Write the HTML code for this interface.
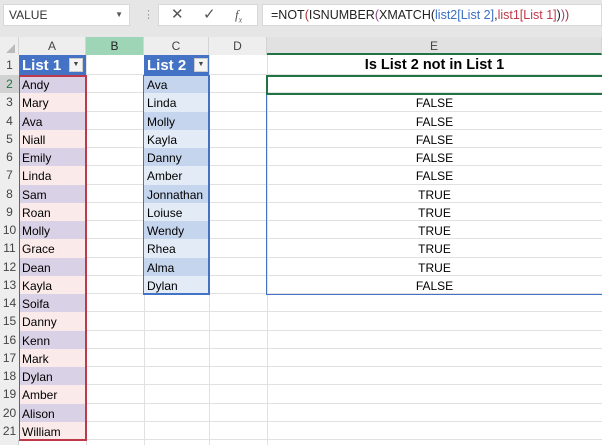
<!DOCTYPE html>
<html><head><style>
*{margin:0;padding:0;box-sizing:border-box}
body{width:602px;height:445px;background:#fff;font-family:"Liberation Sans",Calibri,sans-serif;position:relative;overflow:hidden}
.a{position:absolute}
.c{position:absolute;font-size:12px;line-height:20px;padding-left:3px;color:#000}
.hl{position:absolute;height:1px;background:#e1e1e1;left:19px;width:583px}
.vl{position:absolute;width:1px;background:#e1e1e1;top:55px;height:390px}
.rh{position:absolute;left:0;width:19px;text-align:center;font-size:12px;color:#444;background:#eeeeee}
.ch{position:absolute;top:37px;height:18px;text-align:center;font-size:12px;color:#444;line-height:18px;background:#eeeeee;border-right:1px solid #d4d4d4}
.e{position:absolute;left:267px;width:335px;text-align:center;font-size:12px;line-height:20px}
</style></head><body>
<div class="a" style="left:0;top:0;width:602px;height:37px;background:#e6e6e6"></div>
<div class="a" style="left:3px;top:4px;width:127px;height:22px;background:#fff;border:1px solid #d8d8d8;font-size:12px;line-height:20px;padding-left:5px;color:#333">VALUE<span style="position:absolute;right:6px;top:0;font-size:8px;color:#555">▼</span></div>
<div class="a" style="left:143px;top:8px;color:#999;font-size:11px">⋮</div>
<div class="a" style="left:158px;top:4px;width:100px;height:22px;background:#fff;border:1px solid #d8d8d8;font-size:15px;line-height:20px;color:#555"><span style="position:absolute;left:12px">✕</span><span style="position:absolute;left:44px">✓</span><span style="position:absolute;left:76px;font-style:italic;font-family:'Liberation Serif',serif;font-size:13px">f<sub style="font-size:8px">x</sub></span></div>
<div class="a" style="left:262px;top:4px;width:340px;height:22px;background:#fff;border:1px solid #d8d8d8;font-size:12.5px;line-height:20px;padding-left:8px;color:#222;white-space:nowrap">=NOT<span style="color:#b03030">(</span>ISNUMBER<span style="color:#8a4a8a">(</span>XMATCH(<span style="color:#3a6fc4">list2[List 2]</span>,<span style="color:#c0394a">list1[List 1]</span>)<span style="color:#8a4a8a">)</span><span style="color:#b03030">)</span></div>
<div class="a" style="left:0;top:37px;width:602px;height:18px;background:#eeeeee;border-bottom:1px solid #c8c8c8"></div>
<div class="a" style="left:0;top:37px;width:19px;height:18px;background:#eeeeee;border-right:1px solid #d4d4d4"></div>
<div class="a" style="left:6px;top:44px;width:0;height:0;border-left:9px solid transparent;border-bottom:9px solid #bbb"></div>
<div class="ch" style="left:19px;width:67px">A</div>
<div class="ch" style="left:86px;width:58px;background:#9fd5b7;color:#222">B</div>
<div class="ch" style="left:144px;width:65px">C</div>
<div class="ch" style="left:209px;width:58px">D</div>
<div class="ch" style="left:267px;width:335px;background:#e1e1e1;border-bottom:2px solid #217346">E</div>
<div class="a" style="left:0;top:55px;width:19px;height:390px;background:#eeeeee;border-right:1px solid #c8c8c8"></div>
<div class="vl" style="left:86px"></div><div class="vl" style="left:144px"></div><div class="vl" style="left:209px"></div><div class="vl" style="left:267px"></div>
<div id="g"></div>
<script>
(function(){
var g=document.getElementById('g'),h='';
var T=[55,75];for(var r=2;r<=22;r++)T.push(75+(r-1)*18.25);
for(var r=1;r<=21;r++){var y=T[r-1],ht=T[r]-y;
h+='<div class="hl" style="top:'+(T[r]-1).toFixed(1)+'px"></div>';
h+='<div class="rh" style="top:'+y.toFixed(1)+'px;height:'+ht.toFixed(1)+'px;line-height:'+(ht+1).toFixed(1)+'px;'+(r==2?'background:#d2d2d2;color:#217346':'')+'">'+r+'</div>';}
var L1=["Andy","Mary","Ava","Niall","Emily","Linda","Sam","Roan","Molly","Grace","Dean","Kayla","Soifa","Danny","Kenn","Mark","Dylan","Amber","Alison","William"];
var L2=["Ava","Linda","Molly","Kayla","Danny","Amber","Jonnathan","Loiuse","Wendy","Rhea","Alma","Dylan"];
var E=["","FALSE","FALSE","FALSE","FALSE","FALSE","TRUE","TRUE","TRUE","TRUE","TRUE","FALSE"];
for(var i=0;i<20;i++){var y=T[i+1];h+='<div class="c" style="left:19px;width:67px;top:'+y+'px;height:18.25px;background:'+(i%2?'#fbeaea':'#d9d2e6')+'">'+L1[i]+'</div>';}
for(var i=0;i<12;i++){var y=T[i+1];h+='<div class="c" style="left:144px;width:65px;top:'+y+'px;height:18.25px;background:'+(i%2?'#e3ebf7':'#c6d5ee')+'">'+L2[i]+'</div>';
h+='<div class="e" style="top:'+y+'px">'+E[i]+'</div>';}
g.innerHTML=h;
})();
</script>
<div class="a" style="left:19px;top:55px;width:67px;height:20px;background:#4472c4;color:#fff;font-weight:bold;font-size:15px;line-height:21px;padding-left:3px">List 1<span style="position:absolute;right:3px;top:3px;width:14px;height:14px;background:#f4f4f4;border:1px solid #ccc;color:#444;font-size:7px;line-height:12px;text-align:center">▼</span></div>
<div class="a" style="left:144px;top:55px;width:65px;height:20px;background:#4472c4;color:#fff;font-weight:bold;font-size:15px;line-height:21px;padding-left:3px">List 2<span style="position:absolute;right:1px;top:3px;width:14px;height:14px;background:#f4f4f4;border:1px solid #ccc;color:#444;font-size:7px;line-height:12px;text-align:center">▼</span></div>
<div class="a" style="left:19px;top:75px;width:68px;height:366px;border:2px solid #c0394a;border-left:1px solid #c0394a"></div>
<div class="a" style="left:143px;top:75px;width:67px;height:220px;border:2px solid #4472c4;border-top:1px solid #4472c4;border-left:1px solid #4472c4"></div>
<div class="a" style="left:267px;top:55px;width:335px;height:20px;text-align:center;font-weight:bold;font-size:14.5px;line-height:21px">Is List 2 not in List 1</div>
<div class="a" style="left:266px;top:75px;width:340px;height:220px;border:1px solid #4472c4"></div>
<div class="a" style="left:266px;top:75px;width:340px;height:20px;border:2px solid #217346"></div>
</body></html>
